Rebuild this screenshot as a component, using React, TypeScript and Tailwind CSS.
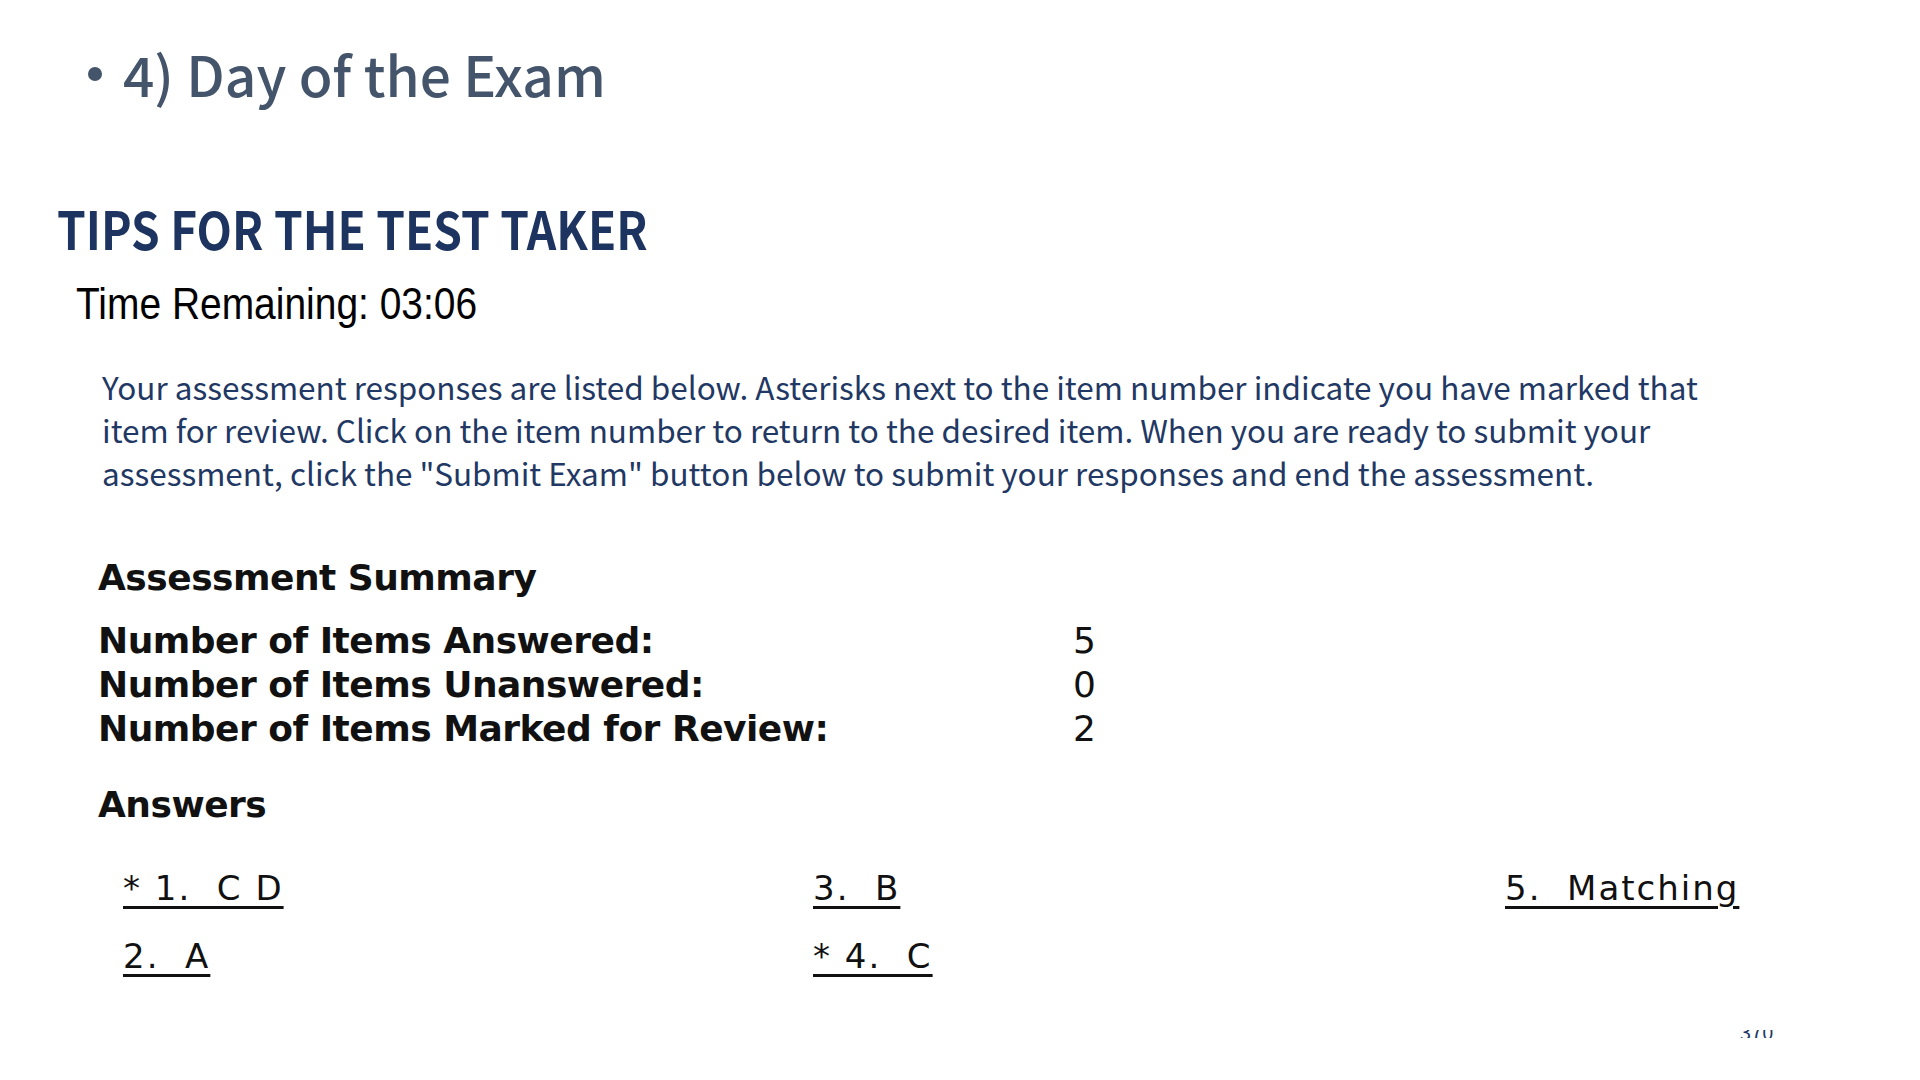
const summary = [
  { label: "Number of Items Answered:", value: "5" },
  { label: "Number of Items Unanswered:", value: "0" },
  { label: "Number of Items Marked for Review:", value: "2" },
];

const answers = [
  ["* 1.  C D", "3.  B", "5.  Matching"],
  ["2.  A", "* 4.  C", ""],
];

const App = () => {
  return (
    <div className="relative w-[1920px] h-[1080px] overflow-hidden bg-white">
      <div className="flex flex-col">
        {/* slide title */}
        <div className="mt-[46px] ml-[88px] flex items-center gap-[21px] text-[#44546a] font-['Noto_Sans_CJK_SC',sans-serif] font-medium text-[55px] leading-none">
          <span className="w-[14px] h-[14px] rounded-full bg-[#44546a]" />
          <span>4) Day of the Exam</span>
        </div>

        <h1 className="mt-[101px] ml-[57px] origin-left scale-x-[0.885] text-[#1c345f] font-['Noto_Sans_CJK_SC',sans-serif] font-bold text-[52px] leading-none">
          TIPS FOR THE TEST TAKER
        </h1>

        {/* exam summary screen */}
        <div className="mt-[28px] ml-[76px] origin-left scale-x-[0.885] text-black font-['Liberation_Sans',Arial,sans-serif] text-[44px] leading-none">
          Time Remaining: 03:06
        </div>

        <p className="mt-[39px] ml-[102px] text-[#1f3864] font-['Noto_Sans_CJK_SC',sans-serif] text-[31.5px] leading-[43px]">
          Your assessment responses are listed below. Asterisks next to the item number indicate you have marked that
          <br />
          item for review. Click on the item number to return to the desired item. When you are ready to submit your
          <br />
          assessment, click the "Submit Exam" button below to submit your responses and end the assessment.
        </p>

        <div className="ml-[98px] text-[#111] font-['DejaVu_Sans',Verdana,sans-serif]">
          <h2 className="mt-[66px] font-bold text-[36px] leading-none tracking-[-0.5px]">Assessment Summary</h2>

          <div className="mt-[23px] grid grid-cols-[975px_1fr] text-[36px] leading-[44px]">
            {summary.map((row) => (
              <div key={row.label} className="contents">
                <span className="font-bold tracking-[-0.5px]">{row.label}</span>
                <span>{row.value}</span>
              </div>
            ))}
          </div>

          <h2 className="mt-[36px] font-bold text-[36px] leading-none tracking-[-0.5px]">Answers</h2>

          <div className="mt-[31px] ml-[25px] grid grid-cols-[690px_692px_1fr] text-[34px] leading-[68px] tracking-[2px] whitespace-pre">
            {answers.flat().map((a, i) => (
              <span key={i}>
                {a && (
                  <span className="underline decoration-[3px] underline-offset-[6px]">{a}</span>
                )}
              </span>
            ))}
          </div>
        </div>
      </div>

      {/* page number, half hidden under the screenshot */}
      <div className="absolute left-[1740px] top-[1030px] h-[8px] overflow-hidden">
        <div className="-mt-[8px] text-[#1f3864] font-['Noto_Sans_CJK_SC',sans-serif] text-[20px] leading-none">
          370
        </div>
      </div>
    </div>
  );
};

export default App;
